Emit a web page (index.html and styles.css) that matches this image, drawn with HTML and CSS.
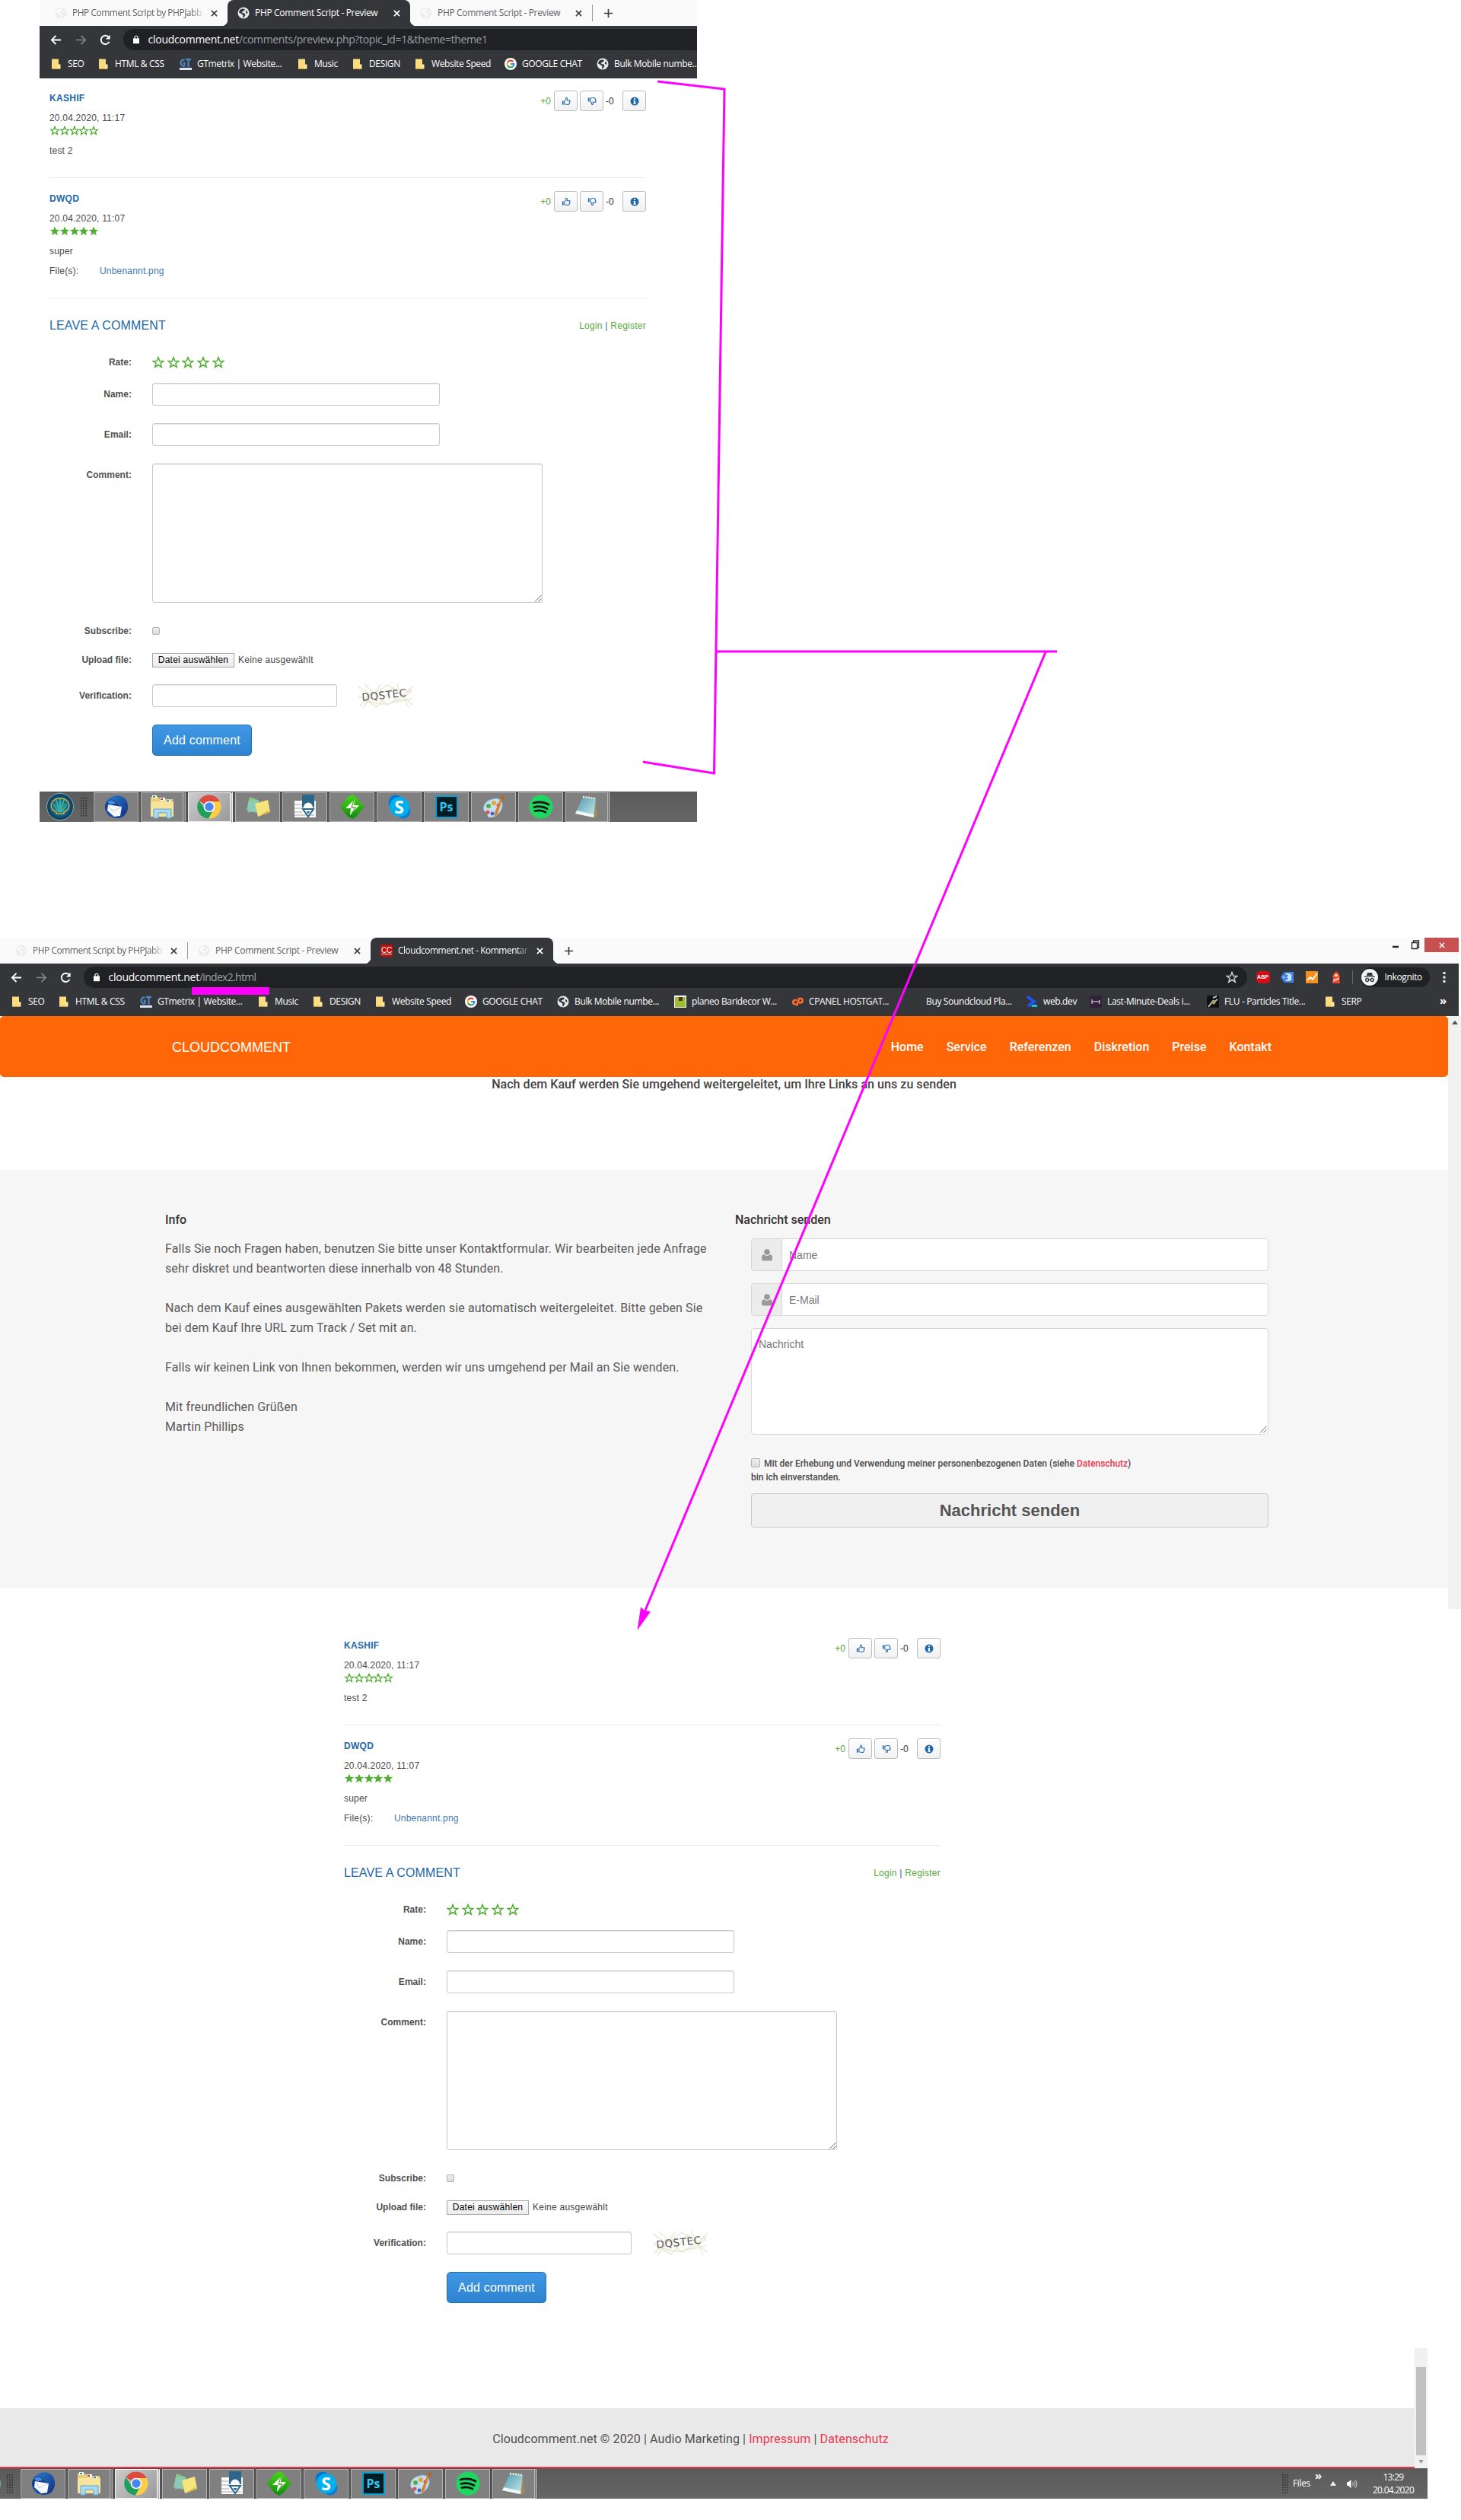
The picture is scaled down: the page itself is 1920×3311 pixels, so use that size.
FILE: index.html
```html
<!DOCTYPE html>
<html lang="de">
<head>
<meta charset="utf-8">
<title>Cloudcomment.net</title>
<link rel="stylesheet" href="styles.css">
</head>
<body>
<svg class="defs" aria-hidden="true">
  <defs>
    <linearGradient id="gBlue" x1="0" y1="0" x2="1" y2="1"><stop offset="0" stop-color="#2f7fd0"/><stop offset="1" stop-color="#0d2f80"/></linearGradient>
    <linearGradient id="gPad" x1="0" y1="0" x2="1" y2="1"><stop offset="0" stop-color="#4f97a8"/><stop offset="1" stop-color="#c5ecf2"/></linearGradient>
    <linearGradient id="gGreen" x1="0" y1="0" x2="0" y2="1"><stop offset="0" stop-color="#46d616"/><stop offset="1" stop-color="#118b0b"/></linearGradient>
    <radialGradient id="gOrb"><stop offset="0" stop-color="#2fa79e"/><stop offset=".7" stop-color="#15597a"/><stop offset="1" stop-color="#0d3450"/></radialGradient>
  </defs>
  <symbol id="globe" viewBox="0 0 16 16"><circle cx="8" cy="8" r="7.5" fill="currentColor"/><path d="M7 2.5 10 3l-1 2-3 1.500.5 1.500 3 .5 1 2.500-2.500 3.500-1-.5.5-3L3.500 8 2 7.500C2 4.500 4 2.800 7 2.500Z" fill="var(--land)"/><path d="M11 4.500l2 1.500.5 3-2.500-1z" fill="var(--land)"/></symbol>
  <symbol id="folder" viewBox="0 0 16 16"><path d="M2 1.500h9v13H2z" fill="#fbdc80"/><path d="M11 8.500h2.500v6H9.500z" fill="#fde9a5"/><path d="M2 13.500h11v1H2z" fill="#e9c257"/></symbol>
  <symbol id="gt" viewBox="0 0 16 16"><path d="M0 13h16v3H0z" fill="#d9e6f3"/><path d="M6.500 3.200A3.200 4 0 1 0 6.500 10V7H4.500M8 2h7M11.500 2v10" fill="none" stroke="#4d7fb8" stroke-width="2.300"/></symbol>
  <symbol id="google" viewBox="0 0 16 16"><circle cx="8" cy="8" r="8" fill="#fff"/><g fill="none" stroke-width="2.200"><path d="M11.300 5A4.400 4.400 0 0 0 4.100 6" stroke="#ea4335"/><path d="M4.100 6a4.400 4.400 0 0 0 0 4" stroke="#fbbc05"/><path d="M4.100 10a4.400 4.400 0 0 0 7 1.300" stroke="#34a853"/><path d="M11.100 11.300A4.400 4.400 0 0 0 12.400 8H8" stroke="#4285f4"/></g></symbol>
  <symbol id="back" viewBox="0 0 16 16"><path d="M15 8H2M8 2 2 8l6 6" fill="none" stroke="currentColor" stroke-width="2"/></symbol>
  <symbol id="fwd" viewBox="0 0 16 16"><path d="M1 8h13M8 2l6 6-6 6" fill="none" stroke="currentColor" stroke-width="1.800"/></symbol>
  <symbol id="reload" viewBox="0 0 16 16"><path d="M13.300 10.500A6 6 0 1 1 12.200 3.700" fill="none" stroke="currentColor" stroke-width="2"/><path d="M14.500.8v6h-6z" fill="currentColor"/></symbol>
  <symbol id="lock" viewBox="0 0 10 14"><path d="M0 5h10v8.500H0z" fill="currentColor"/><path d="M2.500 6V3.500a2.500 2.500 0 0 1 5 0V6" fill="none" stroke="currentColor" stroke-width="1.400"/></symbol>
  <symbol id="close" viewBox="0 0 10 10"><path d="M1 1l8 8M9 1 1 9" stroke="currentColor" stroke-width="1.800"/></symbol>
  <symbol id="plus" viewBox="0 0 14 14"><path d="M7 1v12M1 7h12" stroke="currentColor" stroke-width="1.800"/></symbol>
  <symbol id="starO" viewBox="0 0 16 16"><path d="M8 1.500l1.800 4.700 5 .2-3.900 3.100 1.400 4.800L8 11.500l-4.300 2.800 1.400-4.800L1.200 6.400l5-.2z" fill="none" stroke="currentColor" stroke-width="1.500"/></symbol>
  <symbol id="starF" viewBox="0 0 16 16"><path d="M8 .5l2.100 5.200 5.600.3-4.400 3.500 1.500 5.500L8 11.900 3.200 15l1.500-5.500L.3 6l5.600-.3z" fill="currentColor"/></symbol>
  <symbol id="up" viewBox="0 0 14 14"><path d="M1 6.500h2v6H1z" fill="currentColor"/><path d="M4.500 6.500C6.500 5.500 7 4 7 1.500c2 0 2 2 1.200 4h4c1 0 1 1.500.2 1.800.6.500.5 1.500-.3 1.800.4.600.2 1.400-.5 1.600.2.800-.2 1.500-1.100 1.500-2.500.1-4-.2-6-.9z" fill="none" stroke="currentColor" stroke-width="1.200"/></symbol>
  <symbol id="info" viewBox="0 0 12 12"><circle cx="6" cy="6" r="5.500" fill="currentColor"/><path d="M5 2.200h2v1.700H5zM4.500 5H7v3.400h.8v1.300H4.300V8.400H5V6.200h-.5z" fill="#fff"/></symbol>
  <symbol id="grip" viewBox="0 0 10 32"><path d="M1 1v31M5 1v31M9 1v31" stroke="#2f2f2f" stroke-width="2" stroke-dasharray="2 2.100"/></symbol>
  <symbol id="resize" viewBox="0 0 10 10"><path d="M1 9.500 9.500 1M5.500 9.500l4-4" stroke="#666" stroke-width="1"/></symbol>
  <symbol id="user" viewBox="0 0 14 16"><circle cx="7" cy="4" r="3.800" fill="currentColor"/><path d="M0 13V11C0 8.500 1.500 7.500 3 7.300a5.500 5.500 0 0 0 8 0c1.500.2 3 1.200 3 3.700v2c0 2-1 2.500-2 2.500H2c-1 0-2-.5-2-2.500z" fill="currentColor"/></symbol>

  <symbol id="orb" viewBox="0 0 36 36"><circle cx="18" cy="18" r="17.500" fill="url(#gOrb)" stroke="#78b4c0"/><path d="M8 22C3 13 10 7 18 7s15 6 10 15l-5 3v2H13v-2z" fill="none" stroke="#c8b44d" stroke-width="1.500"/><path d="M16 25 9 14M17 25l-4-16M18 25V8M19 25l4-16M20 25l7-11" stroke="#3fb8a5" stroke-width="1.300"/></symbol>
  <symbol id="bird" viewBox="0 0 32 32"><path d="M10 3C18-1 30 2 31 14c1 10-6 17-14 17C6 31 0 23 1 15c1-6 4-10 9-12z" fill="url(#gBlue)"/><path d="M3 10c4-5 9-4 12 0l5 6-5 12C7 27 1 21 1 16c0-2 1-4 2-6z" fill="#173a86"/><path d="M5 13l18 3-2 12-8 1L4 21z" fill="#f6f7fa"/><path d="M5 13l6 9 12-6" fill="none" stroke="#c5cede"/><path d="M4 10c3-4 9-3 11 2l-7 1z" fill="#3f8ee0"/></symbol>
  <symbol id="files" viewBox="0 0 32 32"><path d="M1 3h10l2 3h17v23H1z" fill="#e9cf73"/><path d="M3 1h6v4H3zM13 4h7v4h-7zM21 7h6v3h-6z" fill="#fff"/><path d="M4 2h3v2H4z" fill="#2aa14a"/><path d="M14 5h3v2h-3z" fill="#d0392e"/><path d="M22 7h3v2h-3z" fill="#3f85cf"/><path d="M1 9h30v20H1z" fill="#f6e49c"/><path d="M5 31V19h23v12h-6v-7H11v7z" fill="#a9daf2" stroke="#5fa5cd"/></symbol>
  <symbol id="chrome" viewBox="0 0 32 32"><path d="M16 16 2.500 8A15.500 15.500 0 0 1 29.700 9H16z" fill="#dd4b3e"/><path d="M2.500 8A15.500 15.500 0 0 0 15 31.500l6.500-11.800L16 16 10 19z" fill="#1f9f5c"/><path d="M16 9h13.700A15.500 15.500 0 0 1 15 31.500l6.800-12z" fill="#fccd45"/><circle cx="16" cy="16" r="7.300" fill="#fff"/><circle cx="16" cy="16" r="5.700" fill="#4688f1"/></symbol>
  <symbol id="notes" viewBox="0 0 32 32"><path d="M5 3l13 5-4 16-13-3z" fill="#86cc80"/><path d="M3 9l13-2 2 13-15 4z" fill="#93c8d9" opacity=".6"/><path d="M12 12l17-5 3 16-16 6z" fill="#f8e47c"/><path d="M16 29l16-6-3-2z" fill="#d9bd4b"/></symbol>
  <symbol id="writer" viewBox="0 0 32 32"><path d="M2 8h28v22H2z" fill="#fafafa"/><path d="M2 13h10M2 18h10M2 23h10M2 27h26" stroke="#aaa" stroke-width="1.200"/><path d="M12 0h16v17H12z" fill="#2b668b"/><path d="M14 17a6 6.500 0 0 1 12 0z" fill="#fff"/><path d="M13 19h14l-7 10z" fill="#fff" stroke="#2b668b" stroke-width="2"/><path d="M17.500 22h5L20 25.500z" fill="#2b668b"/></symbol>
  <symbol id="bolt" viewBox="0 0 32 32"><path d="M16 0l5 3 11 13-11 13-5 3-6-3L0 16 10 3z" fill="url(#gGreen)"/><path d="M19 6 7 18h7l-1 9 12-13h-7z" fill="#fff"/><path d="M18 7l-3 10h5l-5 8" fill="none" stroke="#59a643" stroke-width="1.300"/></symbol>
  <symbol id="skype" viewBox="0 0 32 32"><circle cx="11" cy="10" r="9.500" fill="#0078d4"/><circle cx="21" cy="22" r="9.500" fill="#0b7ed3"/><circle cx="16" cy="16" r="13" fill="#00aff0"/></symbol>
  <symbol id="paint" viewBox="0 0 32 32"><path d="M14 6c9-3 14 2 13 10-2 8-8 14-16 14-5 0-2-5-5-7C0 22 1 9 14 6z" fill="#c5e0f2" stroke="#8fb2cd"/><circle cx="16" cy="11" r="3" fill="#e3a63a"/><circle cx="9" cy="15" r="3" fill="#53b045"/><circle cx="22" cy="14" r="2.500" fill="#de4c3e"/><circle cx="8" cy="23" r="2.500" fill="#e0524b"/><circle cx="14" cy="25" r="2.500" fill="#4467c4"/><path d="M27 5l-6 20-4 6 0-7L25 4z" fill="#d58134"/><path d="M24 2l5-1 2 3-4 4z" fill="#a8683a"/></symbol>
  <symbol id="spotify" viewBox="0 0 32 32"><circle cx="16" cy="16" r="15.500" fill="#1ed760"/><path d="M6 11c7-2 14-1.500 20 2M7 16.500c6-1.500 12-1 17 2M8 21.500c5-1.200 10-.8 14 1.700" fill="none" stroke="#151515" stroke-width="2.700" stroke-linecap="round"/></symbol>
  <symbol id="pad" viewBox="0 0 32 32"><path d="M13 2l15 3 2 24-4 2z" fill="#a58b57"/><path d="M11 3l17 2-3 25-24-5z" fill="url(#gPad)"/><path d="M1 25l24 5 .5-4L3 21z" fill="#f0f5f5"/><path d="M11 3l17 2" stroke="#eee" stroke-width="2.500" stroke-dasharray="2 1.500"/></symbol>
</svg>

<section class="preview">
  <header class="chrome">
    <div class="tabs">
      <div class="tab"><svg class="fav ghost"><use href="#globe"/></svg><span class="tab-title fade">PHP Comment Script by PHPJabb</span><svg class="x"><use href="#close"/></svg></div>
      <div class="tab active"><svg class="fav lit"><use href="#globe"/></svg><span class="tab-title">PHP Comment Script - Preview</span><svg class="x"><use href="#close"/></svg></div>
      <div class="tab divided"><svg class="fav ghost"><use href="#globe"/></svg><span class="tab-title">PHP Comment Script - Preview</span><svg class="x"><use href="#close"/></svg></div>
      <svg class="new"><use href="#plus"/></svg>
    </div>
    <div class="bar">
      <svg class="nav-ic"><use href="#back"/></svg><svg class="nav-ic dim"><use href="#fwd"/></svg><svg class="nav-ic"><use href="#reload"/></svg>
      <div class="omni cut"><svg class="lock"><use href="#lock"/></svg><span class="url">cloudcomment.net<i>/comments/preview.php?topic_id=1&amp;theme=theme1</i></span></div>
    </div>
    <div class="marks">
      <span><svg><use href="#folder"/></svg>SEO</span><span><svg><use href="#folder"/></svg>HTML &amp; CSS</span><span><svg><use href="#gt"/></svg>GTmetrix | Website...</span><span><svg><use href="#folder"/></svg>Music</span><span><svg><use href="#folder"/></svg>DESIGN</span><span><svg><use href="#folder"/></svg>Website Speed</span><span><svg><use href="#google"/></svg>GOOGLE CHAT</span><span><svg class="lit"><use href="#globe"/></svg>Bulk Mobile numbe...</span>
    </div>
  </header>
  <div class="widget">
    <article class="comment first">
      <div class="said"><h4>KASHIF</h4><time>20.04.2020, 11:17</time><div class="stars"><svg><use href="#starO"/></svg><svg><use href="#starO"/></svg><svg><use href="#starO"/></svg><svg><use href="#starO"/></svg><svg><use href="#starO"/></svg></div><p>test 2</p></div>
      <div class="votes"><b>+0</b><button><svg><use href="#up"/></svg></button><button><svg class="down"><use href="#up"/></svg></button><em>-0</em><button class="inf"><svg><use href="#info"/></svg></button></div>
    </article>
    <article class="comment">
      <div class="said"><h4>DWQD</h4><time>20.04.2020, 11:07</time><div class="stars"><svg><use href="#starF"/></svg><svg><use href="#starF"/></svg><svg><use href="#starF"/></svg><svg><use href="#starF"/></svg><svg><use href="#starF"/></svg></div><p>super</p><p class="file"><span>File(s):</span><a>Unbenannt.png</a></p></div>
      <div class="votes"><b>+0</b><button><svg><use href="#up"/></svg></button><button><svg class="down"><use href="#up"/></svg></button><em>-0</em><button class="inf"><svg><use href="#info"/></svg></button></div>
    </article>
    <div class="head"><h3>LEAVE A COMMENT</h3><div class="auth"><a>Login</a> | <a>Register</a></div></div>
    <form class="form">
      <div class="row rate"><label>Rate:</label><div class="stars big"><svg><use href="#starO"/></svg><svg><use href="#starO"/></svg><svg><use href="#starO"/></svg><svg><use href="#starO"/></svg><svg><use href="#starO"/></svg></div></div>
      <div class="row"><label>Name:</label><div class="field"></div></div>
      <div class="row"><label>Email:</label><div class="field"></div></div>
      <div class="row"><label>Comment:</label><div class="field area"><svg><use href="#resize"/></svg></div></div>
      <div class="row subs"><label>Subscribe:</label><div class="check"></div></div>
      <div class="row upload"><label>Upload file:</label><div class="pick"><span>Datei auswählen</span>Keine ausgewählt</div></div>
      <div class="row verify"><label>Verification:</label><div class="pair"><div class="field short"></div>
        <svg class="captcha" viewBox="0 0 72 33"><path d="M0 4l18 12L38 2l20 14L72 3M2 30l16-20 20 18L70 8M0 16l24 15L46 5l26 24M8 1l28 26 34-7M30 1 6 32M50 0 66 31M12 22q30 14 58-12" fill="none" stroke="#ebe8d6" stroke-width="1.500"/><text x="5" y="23" transform="rotate(-6 5 23)">DQSTEC</text></svg></div></div>
      <div class="row last"><button type="button" class="add">Add comment</button></div>
    </form>
  </div>
  <footer class="taskbar">
    <svg class="orb"><use href="#orb"/></svg><svg class="grip"><use href="#grip"/></svg>
    <div class="apps"><i><svg><use href="#bird"/></svg></i><i class="stack"><svg><use href="#files"/></svg></i><i class="stack on"><svg><use href="#chrome"/></svg></i><i><svg><use href="#notes"/></svg></i><i><svg><use href="#writer"/></svg></i><i><svg><use href="#bolt"/></svg></i><i class="sk"><svg><use href="#skype"/></svg><b>S</b></i><i><b class="ps">Ps</b></i><i><svg><use href="#paint"/></svg></i><i><svg><use href="#spotify"/></svg></i><i class="stack"><svg><use href="#pad"/></svg></i></div>
  </footer>
</section>

<section class="window">
  <header class="chrome">
    <div class="tabs">
      <div class="tab divided"><svg class="fav ghost"><use href="#globe"/></svg><span class="tab-title fade">PHP Comment Script by PHPJabb</span><svg class="x"><use href="#close"/></svg></div>
      <div class="tab"><svg class="fav ghost"><use href="#globe"/></svg><span class="tab-title">PHP Comment Script - Preview</span><svg class="x"><use href="#close"/></svg></div>
      <div class="tab active"><span class="fav cc">CC</span><span class="tab-title fade">Cloudcomment.net - Kommentar</span><svg class="x"><use href="#close"/></svg></div>
      <svg class="new"><use href="#plus"/></svg>
      <div class="controls"><svg class="mini" viewBox="0 0 40 19"><path d="M4 12h8" stroke="#222" stroke-width="2.500"/><path d="M29.500 6.500h7v8h-7zM31.500 6V4h7v9h-2" fill="none" stroke="#222" stroke-width="1.300"/></svg><span class="quit"><svg><use href="#close"/></svg></span></div>
    </div>
    <div class="bar">
      <svg class="nav-ic"><use href="#back"/></svg><svg class="nav-ic dim"><use href="#fwd"/></svg><svg class="nav-ic"><use href="#reload"/></svg>
      <div class="omni"><svg class="lock"><use href="#lock"/></svg><span class="url">cloudcomment.net<i>/index2.html</i></span><svg class="fav-star"><use href="#starO"/></svg></div>
      <div class="exts">
        <span class="abp">ABP</span>
        <svg viewBox="0 0 18 16"><path d="M0 8l5-7h12v14H5z" fill="#3f86ee"/><path d="M7 4h4v8H7M8 8h3M13 4v8" stroke="#fff" stroke-width="1.500" fill="none"/><circle cx="4" cy="8" r="1" fill="#fff"/></svg>
        <svg viewBox="0 0 18 16"><path d="M1 0h16v16H1z" fill="#f78f1e"/><path d="M3 12l4-4 3 3 6-8" stroke="#fff" stroke-width="2" fill="none"/></svg>
        <svg viewBox="0 0 18 16"><path d="M5 4l4-4 4 4v2h1v2h-1l1 8H4l1-8H4V6h1z" fill="#f0452f"/><path d="M5 11l8-3v3l-8 3z" fill="#ffb199"/><path d="M7 4h4v3H7z" fill="#ffe3a1"/></svg>
      </div>
      <div class="inko"><svg viewBox="0 0 22 22"><circle cx="11" cy="11" r="11" fill="#f1f3f4"/><path d="M7 9l1-4h6l1 4zM4 9.500h14v1.300H4z" fill="#35363a"/><g fill="none" stroke="#35363a" stroke-width="1.300"><circle cx="7.700" cy="14.500" r="2"/><circle cx="14.300" cy="14.500" r="2"/><path d="M9.700 14.200h2.600"/></g></svg>Inkognito</div>
      <svg class="dots" viewBox="0 0 4 16"><path d="M.5 1h3v3h-3zM.5 6.500h3v3h-3zM.5 12h3v3h-3z" fill="#eee"/></svg>
    </div>
    <div class="marks">
      <span><svg><use href="#folder"/></svg>SEO</span><span><svg><use href="#folder"/></svg>HTML &amp; CSS</span><span><svg><use href="#gt"/></svg>GTmetrix | Website...</span><span><svg><use href="#folder"/></svg>Music</span><span><svg><use href="#folder"/></svg>DESIGN</span><span><svg><use href="#folder"/></svg>Website Speed</span><span><svg><use href="#google"/></svg>GOOGLE CHAT</span><span><svg class="lit"><use href="#globe"/></svg>Bulk Mobile numbe...</span><span><svg viewBox="0 0 16 16"><path d="M0 0h16v16H0z" fill="#fff"/><path d="M1 2h14v13H1z" fill="#9bc031"/><path d="M6 2h5v5H6z" fill="#5b2a1a"/></svg>planeo Baridecor W...</span><span><svg viewBox="0 0 16 16"><g fill="none" stroke="#ff6c2c" stroke-width="2.600"><path d="M7 6H4.500a2.800 2.800 0 0 0 0 5.500H6M7 13.500 10 4h2a2.700 2.700 0 0 1 0 5.400h-2"/></g></svg>CPANEL HOSTGAT...</span><span><svg></svg>Buy Soundcloud Pla...</span><span><svg viewBox="0 0 16 16"><path d="M2 1l9 7-8 6" fill="none" stroke="#1a56ff" stroke-width="3.500"/><path d="M9 12h6v3H7z" fill="#16c6d8"/></svg>web.dev</span><span><svg viewBox="0 0 16 16"><path d="M0 0h16v16H0z" fill="#33203a"/><path d="M3 5v6M3 8h10v3M13 8V6" stroke="#eee" fill="none"/></svg>Last-Minute-Deals i...</span><span><svg viewBox="0 0 16 16"><path d="M0 0h16v16H0z" fill="#111"/><path d="M2 15 9 6M8 3l5-2M10 8l4-3" stroke="#bbb" stroke-width="2"/><path d="M7 10l3-3 2 2-3 3z" fill="#b9b23c"/></svg>FLU - Particles Title...</span><span><svg><use href="#folder"/></svg>SERP</span>
      <b class="more">»</b>
    </div>
  </header>
  <div class="viewport">
    <main class="site">
      <nav class="topnav"><span class="brand">CLOUDCOMMENT</span><div class="links"><a>Home</a><a>Service</a><a>Referenzen</a><a>Diskretion</a><a>Preise</a><a>Kontakt</a></div></nav>
      <h2 class="notice">Nach dem Kauf werden Sie umgehend weitergeleitet, um Ihre Links an uns zu senden</h2>
      <div class="contact">
        <div class="about"><h5>Info</h5><p>Falls Sie noch Fragen haben, benutzen Sie bitte unser Kontaktformular. Wir bearbeiten jede Anfrage<br>sehr diskret und beantworten diese innerhalb von 48 Stunden.</p><p>Nach dem Kauf eines ausgewählten Pakets werden sie automatisch weitergeleitet. Bitte geben Sie<br>bei dem Kauf Ihre URL zum Track / Set mit an.</p><p>Falls wir keinen Link von Ihnen bekommen, werden wir uns umgehend per Mail an Sie wenden.</p><p>Mit freundlichen Grüßen<br>Martin Phillips</p></div>
        <div class="write"><h5>Nachricht senden</h5>
          <div class="inner">
            <div class="inp"><span><svg><use href="#user"/></svg></span>Name</div>
            <div class="inp"><span><svg><use href="#user"/></svg></span>E-Mail</div>
            <div class="msg">Nachricht<svg><use href="#resize"/></svg></div>
            <div class="agree"><span class="check"></span>Mit der Erhebung und Verwendung meiner personenbezogenen Daten (siehe <a>Datenschutz</a>)<br>bin ich einverstanden.</div>
            <div class="send">Nachricht senden</div>
          </div>
        </div>
      </div>
    </main>
    <div class="scroll"><svg viewBox="0 0 10 6"><path d="M0 6 5 0l5 6z" fill="#505050"/></svg></div>
  </div>

  <div class="widget lower">
    <article class="comment first">
      <div class="said"><h4>KASHIF</h4><time>20.04.2020, 11:17</time><div class="stars"><svg><use href="#starO"/></svg><svg><use href="#starO"/></svg><svg><use href="#starO"/></svg><svg><use href="#starO"/></svg><svg><use href="#starO"/></svg></div><p>test 2</p></div>
      <div class="votes"><b>+0</b><button><svg><use href="#up"/></svg></button><button><svg class="down"><use href="#up"/></svg></button><em>-0</em><button class="inf"><svg><use href="#info"/></svg></button></div>
    </article>
    <article class="comment">
      <div class="said"><h4>DWQD</h4><time>20.04.2020, 11:07</time><div class="stars"><svg><use href="#starF"/></svg><svg><use href="#starF"/></svg><svg><use href="#starF"/></svg><svg><use href="#starF"/></svg><svg><use href="#starF"/></svg></div><p>super</p><p class="file"><span>File(s):</span><a>Unbenannt.png</a></p></div>
      <div class="votes"><b>+0</b><button><svg><use href="#up"/></svg></button><button><svg class="down"><use href="#up"/></svg></button><em>-0</em><button class="inf"><svg><use href="#info"/></svg></button></div>
    </article>
    <div class="head"><h3>LEAVE A COMMENT</h3><div class="auth"><a>Login</a> | <a>Register</a></div></div>
    <form class="form">
      <div class="row rate"><label>Rate:</label><div class="stars big"><svg><use href="#starO"/></svg><svg><use href="#starO"/></svg><svg><use href="#starO"/></svg><svg><use href="#starO"/></svg><svg><use href="#starO"/></svg></div></div>
      <div class="row"><label>Name:</label><div class="field"></div></div>
      <div class="row"><label>Email:</label><div class="field"></div></div>
      <div class="row"><label>Comment:</label><div class="field area"><svg><use href="#resize"/></svg></div></div>
      <div class="row subs"><label>Subscribe:</label><div class="check"></div></div>
      <div class="row upload"><label>Upload file:</label><div class="pick"><span>Datei auswählen</span>Keine ausgewählt</div></div>
      <div class="row verify"><label>Verification:</label><div class="pair"><div class="field short"></div>
        <svg class="captcha" viewBox="0 0 72 33"><path d="M0 4l18 12L38 2l20 14L72 3M2 30l16-20 20 18L70 8M0 16l24 15L46 5l26 24M8 1l28 26 34-7M30 1 6 32M50 0 66 31M12 22q30 14 58-12" fill="none" stroke="#ebe8d6" stroke-width="1.500"/><text x="5" y="23" transform="rotate(-6 5 23)">DQSTEC</text></svg></div></div>
      <div class="row last"><button type="button" class="add">Add comment</button></div>
    </form>
  </div>

  <div class="ending">
    <div class="sitefoot"><p>Cloudcomment.net © 2020 | Audio Marketing | <a>Impressum</a> | <a>Datenschutz</a></p></div>
    <div class="track"><i></i><svg viewBox="0 0 8 6"><path d="M0 0h8L4 6z" fill="#9b9b9b"/></svg></div>
  </div>
  <footer class="taskbar full">
    <svg class="orb"><use href="#orb"/></svg><svg class="grip"><use href="#grip"/></svg>
    <div class="apps"><i><svg><use href="#bird"/></svg></i><i class="stack"><svg><use href="#files"/></svg></i><i class="stack on"><svg><use href="#chrome"/></svg></i><i><svg><use href="#notes"/></svg></i><i><svg><use href="#writer"/></svg></i><i><svg><use href="#bolt"/></svg></i><i class="sk"><svg><use href="#skype"/></svg><b>S</b></i><i><b class="ps">Ps</b></i><i><svg><use href="#paint"/></svg></i><i><svg><use href="#spotify"/></svg></i><i class="stack"><svg><use href="#pad"/></svg></i></div>
    <div class="tray"><svg class="grip"><use href="#grip"/></svg><span class="tf">Files</span><b>»</b><svg class="tri" viewBox="0 0 8 6"><path d="M0 6 4 0l4 6z" fill="#eee"/></svg><svg class="spk" viewBox="0 0 16 14"><path d="M1 4.500h2L7 1v12L3 9.500H1z" fill="#fff"/><path d="M9 4.500q2 2.500 0 5M11 3q3.500 4 0 8M13 1.500q4 5.500 0 11" fill="none" stroke="#ddd"/></svg><time>13:29<br>20.04.2020</time></div>
  </footer>
</section>

<svg class="notes" viewBox="0 0 1920 3311">
  <g fill="none" stroke="#f0f" stroke-width="3">
    <path d="M864 107l88 10-13.500 899L845 1001"/>
    <path d="M941 856h448M1374 857 847 2118"/>
  </g>
  <path d="M837.500 2142 842 2111.500 847 2116l8 1.500z" fill="#f0f"/>
  <path d="M252 1297h102v10H252z" fill="#f0f"/>
</svg>
</body>
</html>
```

FILE: styles.css
```css
* { box-sizing: border-box; }
body { margin: 0; width: 1920px; height: 3311px; position: relative; overflow: hidden; background: #fff; font: 12px/16px "Liberation Sans", Arial, sans-serif; color: #4a4a4a; }
h2, h3, h4, h5, p { margin: 0; font-weight: normal; }
svg { display: block; flex: none; }
i, em { font-style: normal; }
.defs { position: absolute; width: 0; height: 0; }
.notes { position: absolute; left: 0; top: 0; width: 1920px; height: 3311px; pointer-events: none; }

/* browser frame */
.preview { margin-left: 52px; width: 864px; height: 1080px; display: flex; flex-direction: column; }
.window { margin-top: 152px; }
.chrome { height: 103px; background: #35363a; overflow: hidden; font-family: "Open Sans", "Noto Sans", sans-serif; --land: #35363a; }
.window .chrome { width: 1917px; }
.tabs { height: 34px; background: #fafafa; display: flex; padding-left: 7px; }
.tab { width: 240px; height: 34px; display: flex; align-items: center; padding: 0 11px 0 13px; font-size: 12px; letter-spacing: -.34px; color: #5f6368; position: relative; --land: #fafafa; }
.tab.active { background: #35363a; color: #fff; border-radius: 8px 8px 0 0; --land: #35363a; }
.tab.active::before, .tab.active::after { content: ""; position: absolute; bottom: 0; width: 8px; height: 8px; }
.tab.active::before { left: -8px; background: radial-gradient(circle at 0 0, transparent 8px, #35363a 8.5px); }
.tab.active::after { right: -8px; background: radial-gradient(circle at 100% 0, transparent 8px, #35363a 8.5px); }
.tab.divided { border-right: 1px solid #999; border-image: linear-gradient(transparent 20%, #999 20%, #999 80%, transparent 80%) 1; }
.fav { width: 16px; height: 16px; margin-right: 7px; flex: none; }
.ghost { color: #ededed; }
.lit { color: #e8eaed; }
.cc { background: #c00d0d; color: #fff; font: 10px/16px "Liberation Sans", sans-serif; text-align: center; text-decoration: underline; }
.tab-title { flex: 1; white-space: nowrap; margin-right: 8px; }
.tab-title.fade { letter-spacing: -.5px; mask-image: linear-gradient(90deg, #000 90%, transparent); }
.x { width: 9px; height: 9px; margin-right: 2px; color: #3c4043; }
.active .x { color: #fff; }
.new { width: 13px; height: 13px; margin: 11px 0 0 14px; color: #3c4043; }
.controls { margin-left: auto; display: flex; height: 19px; }
.mini { width: 40px; height: 19px; margin-right: 6px; }
.quit { width: 45px; background: #c75050; color: #fff; display: grid; place-items: center; }
.quit svg { width: 8px; height: 8px; }
.bar { height: 36px; display: flex; align-items: center; padding-left: 14px; color: #fff; }
.nav-ic { width: 15px; height: 15px; margin-right: 17.500px; }
.dim { color: #85868a; }
.omni { width: 1529px; height: 28px; margin-left: -2px; border-radius: 14px; background: #202124; display: flex; align-items: center; padding: 0 12px 0 13px; font-size: 14px; }
.omni.cut { width: 760px; flex: none; border-radius: 14px 0 0 14px; }
.lock { width: 8px; height: 12px; margin-right: 12px; }
.url { letter-spacing: -.25px; }
.url i { color: #9aa0a6; letter-spacing: -.37px; }
.window .url i { letter-spacing: -.7px; }
.fav-star { width: 16px; height: 16px; margin-left: auto; color: #ccc; }
.exts { display: flex; gap: 14px; margin-left: 12px; padding-right: 12px; border-right: 1px solid #66676a; height: 18px; align-items: center; }
.exts svg { width: 18px; height: 16px; }
.abp { width: 18px; height: 16px; border-radius: 5px; background: #d60d17; color: #fff; font: bold 7px/16px "Liberation Sans", sans-serif; text-align: center; }
.inko { display: flex; align-items: center; width: 91px; height: 26px; border-radius: 13px; background: #202124; margin-left: 10px; font-size: 12px; letter-spacing: -.35px; }
.inko svg { width: 22px; height: 22px; margin: 0 9px 0 1px; }
.dots { width: 4px; height: 16px; margin-left: 17px; }
.marks { height: 33px; padding: 11px 0 6px 14px; display: grid; grid-template-columns: 62px 108px 154px 72px 82px 119px 121px 154px 154px 154px 154px 84px 154px 154px 152px 20px; font-size: 12px; line-height: 16px; letter-spacing: -.36px; color: #fff; align-items: start; margin-top: -5px; padding-top: 11px; }
.marks span { display: flex; white-space: nowrap; }
.marks svg { width: 16px; height: 16px; margin-right: 7px; }
.more { font-size: 15px; line-height: 13px; }

/* comment widget */
.widget { width: 784px; margin-left: 13px; --land: #fff; }
.widget.lower { margin: 22px 0 0 452px; }
.comment { display: flex; justify-content: space-between; align-items: flex-start; padding: 18px 0 27px; border-bottom: 1px solid #e9e9e9; }
.comment.first { padding-top: 17px; }
.said { padding-top: 1px; letter-spacing: .2px; }
.said h4 { font-weight: bold; color: #2168a8; letter-spacing: .3px; }
.said time { display: block; margin-top: 10px; }
.said p { margin-top: 11px; }
.said .file { margin-top: 10px; display: flex; }
.file span { width: 66px; }
.file a { color: #4078b5; }
.stars { display: flex; height: 16px; align-items: center; color: #4fae33; }
.stars svg { width: 14px; height: 13px; margin-right: -1.200px; }
.stars.big svg { width: 16px; height: 16px; margin-right: 3.700px; }
.votes { display: flex; align-items: center; height: 27px; margin-top: -1px; color: #333; }
.votes b { font-weight: normal; color: #55a83a; margin-right: 4px; }
.votes em { width: 22px; }
.votes button { width: 31px; height: 27px; margin: 0 3px 0 0; padding: 0; border: 1px solid #bcbcbc; border-radius: 3px; background: linear-gradient(#fff, #f1f1f1); display: grid; place-items: center; color: #2168a8; }
.votes .inf { margin: 0; }
.votes svg { width: 12px; height: 12px; }
.votes .down { transform: scaleY(-1); }
.head { margin-top: 25px; height: 20px; display: flex; justify-content: space-between; line-height: 21px; color: #2168a8; }
.head h3 { font-size: 16px; letter-spacing: .13px; }
.auth { padding-top: 1px; letter-spacing: .25px; }
.auth a { color: #55a83a; }
.form { padding-top: 29px; }
.row { display: grid; grid-template-columns: 108px 1fr; column-gap: 27px; margin-bottom: 23px; }
.row label { text-align: right; font-weight: bold; line-height: 30px; font-size: 12px; letter-spacing: .02px; color: #505050; }
.rate { height: 20px; margin-bottom: 17px; align-items: center; }
.field { width: 378px; height: 30px; border: 1px solid #c8c8c8; border-radius: 3px; background: #fff; box-shadow: inset 0 1px 1px #e8e8e8; }
.area { width: 513px; height: 183px; display: flex; align-items: flex-end; justify-content: flex-end; }
.area svg, .msg svg { width: 10px; height: 10px; }
.row.subs { height: 16px; margin: 29px 0 20px; align-items: center; }
.subs label, .rate label, .upload label { line-height: 16px; }
.check { width: 10px; height: 10px; border: 1px solid #b0b0b0; border-radius: 2px; background: linear-gradient(#eee, #dcdcdc); }
.row.upload { height: 20px; margin-bottom: 22px; align-items: center; }
.pick { display: flex; align-items: center; height: 20px; font-size: 12px; letter-spacing: .25px; color: #444; }
.pick span { width: 108px; height: 19px; line-height: 17px; border: 1px solid #a5a5a5; background: linear-gradient(#fafafa, #ececec); color: #000; text-align: center; margin-right: 5px; }
.pair { display: flex; height: 30px; }
.short { width: 243px; }
.captcha { width: 72px; height: 33px; margin: -1px 0 0 28px; }
.captcha text { font: 13.500px "DejaVu Sans", sans-serif; letter-spacing: .6px; fill: #555; }
.row.last { margin: 0; }
.add { grid-column: 2; width: 131px; height: 41px; padding: 0; border: 1px solid #2370b8; border-radius: 5px; background: linear-gradient(#4098e4, #2d83d0); color: #fff; font: 16px "Liberation Sans", sans-serif; letter-spacing: .2px; }

/* taskbar */
.taskbar { height: 40px; background: linear-gradient(#5a5a5a, #666); margin-top: auto; display: flex; align-items: center; padding-left: 9px; overflow: hidden; flex: none; }
.orb { width: 36px; height: 36px; margin-right: 9px; }
.taskbar .grip { width: 8px; height: 32px; margin-right: 9px; }
.taskbar.full { width: 1876px; padding-left: 0; margin: 0; }
.full .orb { margin-left: -35px; margin-right: 8px; }
.full .grip { margin-right: 10px; }
.apps { display: flex; gap: 3px; }
.apps i { width: 59px; height: 39px; border: 1px solid #b5b5b5; outline: 1px solid #4b4b4b; background: #808080; display: grid; place-items: center; position: relative; }
.apps i svg { width: 32px; height: 32px; }
.apps .stack { border-right: 4px double #b5b5b5; }
.apps .on { background: linear-gradient(135deg, #ccc, #999); border-color: #f4f4f4; }
.sk b { position: absolute; font: bold 23px/32px "Open Sans", sans-serif; color: #fff; }
.ps { width: 30px; height: 30px; background: #001d26; border: 2px solid #0a9fd0; color: #31c5f0; font: bold 16px/26px "Open Sans", sans-serif; text-align: center; }
.tray { margin-left: auto; width: 191px; display: flex; align-items: center; color: #fff; font: 12px/16px "Open Sans", sans-serif; letter-spacing: -.35px; }
.full .tray .grip { margin-right: 6px; }
.tf { width: 29px; }
.tray b { font-size: 15px; width: 20px; margin-top: -22px; }
.tri { width: 8px; height: 6px; margin-right: 13px; }
.spk { width: 15px; height: 15px; margin-right: 14px; }
.tray time { width: 66px; text-align: center; line-height: 17px; letter-spacing: -.7px; }

/* site */
.viewport { display: flex; height: 779px; }
.site { width: 1903px; font-family: Roboto, sans-serif; }
.topnav { height: 80px; background: #ff6607; border-radius: 5px; padding: 2px 232px 0 226px; display: flex; align-items: center; justify-content: space-between; color: #fff; }
.brand { font: 18px "Liberation Sans", sans-serif; }
.links { display: flex; gap: 30px; font-size: 16px; font-weight: 500; }
.notice { height: 122px; line-height: 19px; font-size: 16px; font-weight: 500; letter-spacing: .05px; text-align: center; color: #444; }
.contact { height: 550px; background: #f6f6f6; padding: 53px 0 0 217px; display: flex; }
.contact h5 { font-size: 16px; line-height: 26px; font-weight: 500; color: #333; }
.about { width: 749px; font-size: 16px; line-height: 26px; letter-spacing: .11px; color: #5a5a5a; }
.about p { margin-bottom: 26px; }
.about h5 { margin-bottom: 12px; letter-spacing: 0; }
.write { width: 701px; }
.inner { margin: 11px 0 0 21px; width: 680px; }
.inp { height: 43px; margin-bottom: 16px; border: 1px solid #d8d8d8; border-radius: 4px; background: #fff; display: flex; align-items: center; font: 14px "Liberation Sans", sans-serif; color: #777; overflow: hidden; }
.inp span { width: 40px; height: 41px; margin-right: 9px; background: #ececec; border-right: 1px solid #d8d8d8; display: grid; place-items: center; color: #999; }
.inp svg { width: 14px; height: 16px; }
.msg { height: 140px; border: 1px solid #d8d8d8; border-radius: 4px; background: #fff; padding: 12px 1px 1px 9px; font: 14px/17px "Liberation Sans", sans-serif; color: #777; display: flex; justify-content: space-between; }
.msg svg { align-self: flex-end; }
.agree { margin-top: 29px; font-size: 12px; line-height: 18px; font-weight: 500; color: #4a4a4a; }
.agree .check { display: inline-block; width: 12px; height: 12px; margin-right: 5px; vertical-align: -1px; }
.agree a, .sitefoot a { color: #ea3750; }
.send { margin-top: 12px; height: 45px; border: 1px solid #c9c9c9; border-radius: 4px; background: #f0f0f0; font: bold 22px/43px "Liberation Sans", sans-serif; color: #555; text-align: center; }
.scroll { width: 17px; background: #f1f1f1; display: flex; justify-content: center; padding-top: 6px; }
.scroll svg { width: 8px; height: 5px; }
.ending { display: flex; height: 158px; margin-top: 59px; }
.sitefoot { width: 1859px; padding-top: 79px; font: 16px/81px Roboto, sans-serif; letter-spacing: .09px; text-align: center; color: #505050; }
.sitefoot p { height: 79px; background: #e9e9e9; border-bottom: 2px solid #ea3750; padding-right: 44px; }
.track { width: 17px; background: #f1f1f1; display: flex; flex-direction: column; align-items: center; padding-top: 25px; }
.track i { width: 13px; height: 116px; background: #c1c1c1; }
.track svg { width: 7px; height: 5px; margin-top: 6px; }
```
